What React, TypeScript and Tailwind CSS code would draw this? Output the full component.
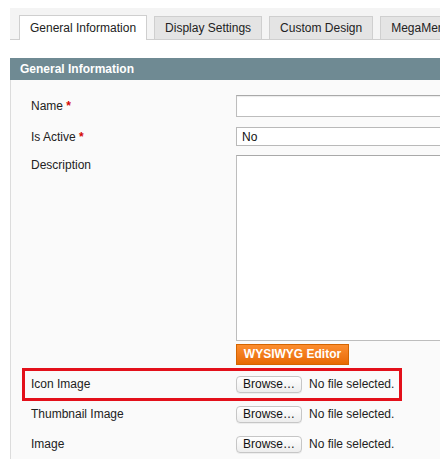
const tabs = ['General Information', 'Display Settings', 'Custom Design', 'MegaMenu Content'];

const FileRow = ({ label, highlight }: { label: string; highlight?: boolean }) => (
  <div className="relative flex items-center h-[30px]">
    {highlight && (
      <div className="absolute left-[-9px] top-[-1px] w-[380px] h-[33px] border-[3px] border-[#e3101a]"></div>
    )}
    <div className="w-[205px] text-[12px] text-[#222]">{label}</div>
    <div className="flex items-center">
      <button className="h-[17px] w-[66px] rounded-[4px] border border-[#c6c6c6] bg-gradient-to-b from-white to-[#ededed] text-[12px] leading-none text-[#111] shadow-[0_1px_0_rgba(0,0,0,0.05)]">
        Browse…
      </button>
      <span className="ml-[7px] text-[12px] text-[#222]">No file selected.</span>
    </div>
  </div>
);

export default function App() {
  return (
    <div className="w-[440px] h-[459px] overflow-hidden bg-white font-['Liberation_Sans',Arial,sans-serif]">
      <div className="w-[600px]">
        {/* tabs */}
        <div className="mt-[8px] ml-[10px] h-[32px] bg-[#f4f4f4] border-b border-[#cfcfcf] flex items-end pl-[9px] gap-[7px]">
          {tabs.map((t, i) =>
            i === 0 ? (
              <div
                key={t}
                className="mb-[-1px] h-[25px] px-[10px] bg-white border border-b-0 border-[#cfcfcf] text-[12px] text-[#222] flex items-center whitespace-nowrap"
              >
                {t}
              </div>
            ) : (
              <div
                key={t}
                className="h-[23px] px-[10px] bg-[#e4e4e4] border border-b-0 border-[#cfcfcf] text-[12px] text-[#222] flex items-center whitespace-nowrap"
              >
                {t}
              </div>
            )
          )}
        </div>

        {/* fieldset header */}
        <div className="mt-[18px] ml-[10px] h-[22px] bg-[#6f8a93] pl-[10px] flex items-center text-[12px] font-bold text-white">
          General Information
        </div>

        {/* panel */}
        <div className="ml-[10px] bg-[#fafafa] border-l border-[#dcdcdc] pt-[15px] pl-[20px] pb-[20px]">
          <div className="flex items-center h-[22px]">
            <div className="w-[205px] text-[12px] text-[#222]">
              Name <span className="text-[#d40707] font-bold">*</span>
            </div>
            <div className="h-[22px] w-[260px] bg-white border border-[#bdbdbd] border-t-[#a9a9a9] shadow-[inset_0_1px_1px_rgba(0,0,0,0.08)]"></div>
          </div>

          <div className="flex items-center h-[19px] mt-[10px]">
            <div className="w-[205px] text-[12px] text-[#222]">
              Is Active <span className="text-[#d40707] font-bold">*</span>
            </div>
            <div className="h-[19px] w-[260px] bg-white border border-[#b9b9b9] pl-[5px] flex items-center text-[12px] text-[#111]">
              No
            </div>
          </div>

          <div className="flex mt-[9px]">
            <div className="w-[205px] text-[12px] text-[#222] leading-[20px]">Description</div>
            <div>
              <div className="h-[186px] w-[260px] bg-white border border-[#bdbdbd] border-t-[#a9a9a9]"></div>
              <button className="mt-[2px] h-[21px] w-[113px] bg-gradient-to-b from-[#fc8d2e] to-[#e86a00] border border-[#d46400] text-[12px] font-bold text-white leading-none">
                WYSIWYG Editor
              </button>
            </div>
          </div>

          <div className="mt-[4px]">
            <FileRow label="Icon Image" highlight />
            <FileRow label="Thumbnail Image" />
            <FileRow label="Image" />
          </div>
        </div>
      </div>
    </div>
  );
}
